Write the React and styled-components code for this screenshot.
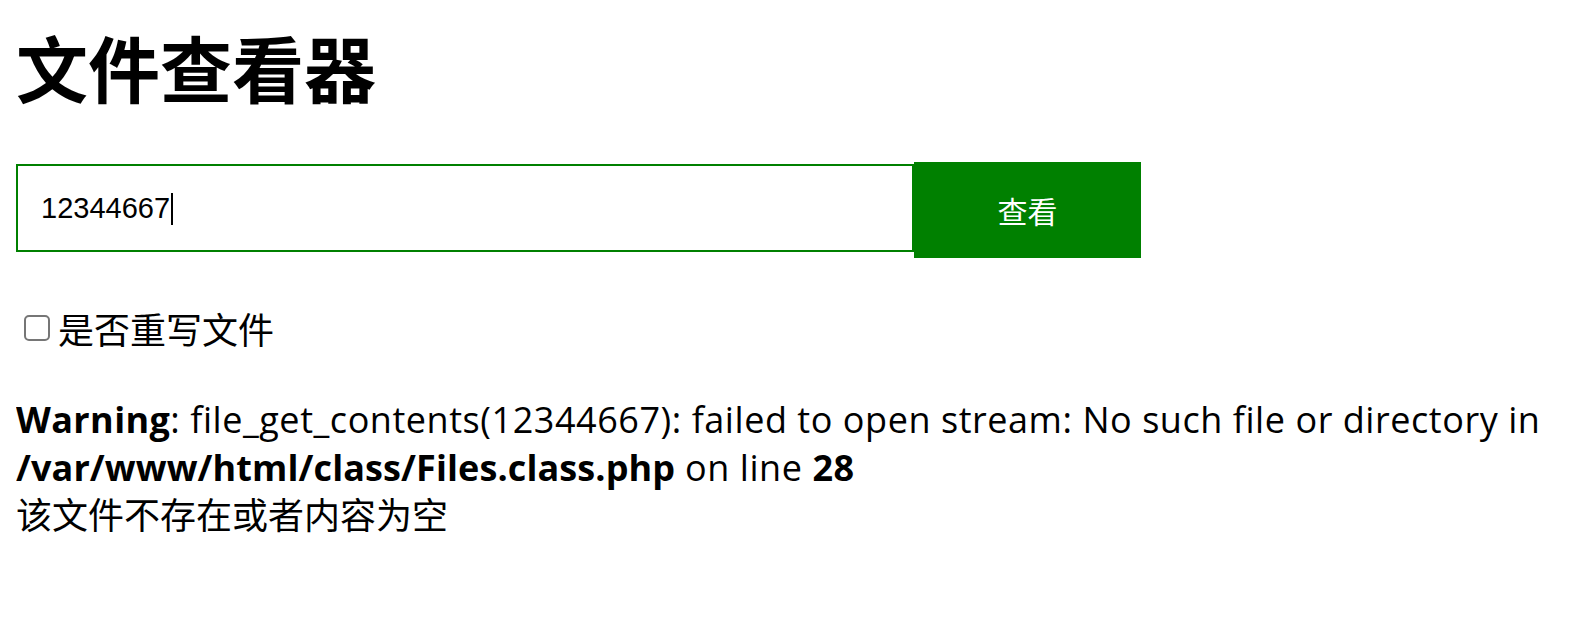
import React from "react";
import styled, { createGlobalStyle } from "styled-components";

const Global = createGlobalStyle`
  html, body { background: #fff; }
  body {
    margin: 16px;
    color: #000;
    font-family: "Open Sans", "Noto Sans CJK SC", sans-serif;
    font-size: 36px;
    line-height: 46px;
  }
`;

const Title = styled.h1`
  margin: 0;
  padding-top: 2px;
  font-family: "Noto Sans CJK SC", sans-serif;
  font-weight: 700;
  font-size: 72px;
  line-height: 96px;
`;

const Form = styled.form`
  display: flex;
  align-items: flex-start;
  margin-top: 48px;
`;

const FieldBox = styled.label`
  box-sizing: border-box;
  display: flex;
  align-items: center;
  width: 898px;
  height: 88px;
  margin-top: 2px;
  padding-left: 23px;
  border: 2px solid #008000;
  background: #fff;
  cursor: text;
`;

const Field = styled.input`
  field-sizing: content;
  margin: 0;
  padding: 0;
  border: none;
  outline: none;
  background: transparent;
  color: #000;
  font-family: "Liberation Sans", Arial, sans-serif;
  font-size: 29px;
`;

const Caret = styled.span`
  display: block;
  width: 2px;
  height: 32px;
  margin-left: 1px;
  margin-top: 2px;
  background: #000;
`;

const Submit = styled.button`
  box-sizing: border-box;
  width: 227px;
  height: 96px;
  margin: 0;
  border: none;
  background: #008000;
  color: #fff;
  font-family: "Noto Sans CJK SC", sans-serif;
  font-size: 30px;
  padding: 0;
`;

const CheckRow = styled.label`
  display: flex;
  align-items: center;
  margin-top: 47px;
  font-family: "Noto Sans CJK SC", sans-serif;
  font-size: 36px;
`;

const Box = styled.input.attrs({ type: "checkbox" })`
  appearance: none;
  box-sizing: border-box;
  width: 26px;
  height: 26px;
  margin: 0 8px 0 8px;
  border: 2px solid #767676;
  border-radius: 5px;
  background: #fff;
`;

const Message = styled.div`
  margin-top: 45px;
  font-family: "Open Sans", "Noto Sans CJK SC", sans-serif;
  font-size: 36px;
  line-height: 48px;
`;

const Latin = styled.span`
  letter-spacing: 0.55px;
`;

const B = styled.b`
  font-weight: 700;
  letter-spacing: ${(p) => (p.$tight ? "0.1px" : "0.4px")};
`;

export default function App() {
  return (
    <>
      <Global />
      <Title>文件查看器</Title>
      <Form onSubmit={(e) => e.preventDefault()}>
        <FieldBox>
          <Field defaultValue="12344667" />
          <Caret />
        </FieldBox>
        <Submit type="submit">查看</Submit>
      </Form>
      <CheckRow>
        <Box />
        是否重写文件
      </CheckRow>
      <Message>
        <Latin>
          <B>Warning</B>: file_get_contents(12344667): failed to open stream: No such file or directory in{" "}
          <B $tight>/var/www/html/class/Files.class.php</B> on line <B>28</B>
        </Latin>
        <br />
        该文件不存在或者内容为空
      </Message>
    </>
  );
}
